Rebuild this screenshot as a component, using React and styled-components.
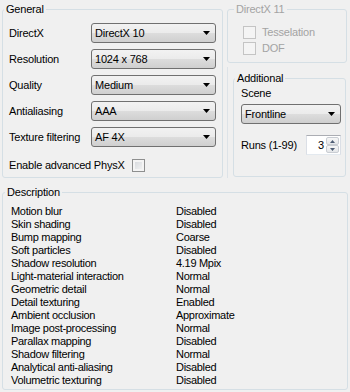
import React from 'react'
import styled, { createGlobalStyle } from 'styled-components'

const GlobalStyle = createGlobalStyle`
  html, body {
    margin: 0;
    padding: 0;
    background: #f0f0f0;
  }
  body {
    font-family: "Liberation Sans", Arial, sans-serif;
    font-size: 11px;
    color: #000;
  }
`;

const Window = styled.div`
  width: 350px;
  height: 392px;
  box-sizing: border-box;
  padding: 3px 0 0 2px;
  display: flex;
  flex-direction: column;
  gap: 8px;
  overflow: hidden;
  letter-spacing: -0.2px;
`;

const TopRow = styled.div`
  display: flex;
  gap: 4px;
`;

const Column = styled.div`
  display: flex;
  flex-direction: column;
  gap: 4px;
`;

const GroupBox = styled.fieldset`
  margin: 0;
  padding: 0;
  min-width: 0;
  box-sizing: border-box;
  width: ${p => p.$w}px;
  height: ${p => p.$h}px;
  border: 1px solid #d5dfe5;
  border-radius: 3px;
`;

const Legend = styled.legend`
  margin-left: ${p => p.$offset}px;
  padding: 0 2px;
  line-height: 13px;
  color: ${p => (p.$disabled ? '#a3a3a3' : '#000')};
`;

// thin frame the "Additional" group sits in
const Panel = styled.div`
  box-sizing: border-box;
  width: 122px;
  height: 111px;
  padding: 5px 0 0 5px;
  border-left: 1px solid #dde3e8;
`;

const FormGrid = styled.div`
  display: grid;
  grid-template-columns: 82px 125px;
  grid-auto-rows: 20px;
  row-gap: 6px;
  align-items: center;
  padding: 7px 0 0 6px;
`;

const Label = styled.span`
  line-height: 13px;
  white-space: nowrap;
  color: ${p => (p.$disabled ? '#a3a3a3' : '#000')};
`;

const Combo = styled.div`
  box-sizing: border-box;
  width: ${p => p.$w || 125}px;
  height: 20px;
  display: flex;
  align-items: center;
  justify-content: space-between;
  padding: 0 5px 0 3px;
  border: 1px solid #707070;
  border-radius: 3px;
  background: linear-gradient(#f2f2f2 0%, #ebebeb 50%, #dddddd 50%, #cfcfcf 100%);
  white-space: nowrap;
`;

const CheckRow = styled.div`
  display: flex;
  align-items: center;
  gap: ${p => p.$gap}px;
  height: 13px;
  margin-top: ${p => p.$top || 0}px;
  padding-left: ${p => p.$indent || 0}px;
`;

const CheckBox = styled.span`
  box-sizing: border-box;
  width: 13px;
  height: 13px;
  flex: none;
  border: 1px solid ${p => (p.$disabled ? '#c4c4c4' : '#8e8f8f')};
  background: ${p =>
    p.$disabled ? '#f4f4f4' : 'linear-gradient(135deg, #d2d5da 0%, #f6f6f6 100%)'};
  box-shadow: inset 0 0 0 2px #f4f4f4;
`;

const CheckList = styled.div`
  display: flex;
  flex-direction: column;
  gap: 3px;
  padding: 10px 0 0 15px;
`;

const AdditionalBody = styled.div`
  display: flex;
  flex-direction: column;
  padding: 2px 0 0 7px;
`;

const Stack = styled.div`
  margin-top: ${p => p.$top}px;
`;

const RunsRow = styled.div`
  display: flex;
  align-items: center;
  height: 20px;
  margin-top: 11px;
`;

const RunsLabel = styled.span`
  width: 65px;
  line-height: 13px;
  white-space: nowrap;
`;

const Spinner = styled.div`
  box-sizing: border-box;
  width: 35px;
  height: 20px;
  display: flex;
  background: #fff;
  border: 1px solid #dbdfe6;
  border-top-color: #abadb3;
  border-bottom-color: #e3e9ef;
`;

const SpinValue = styled.span`
  flex: 1;
  text-align: right;
  padding-right: 2px;
  line-height: 18px;
`;

const SpinButtons = styled.div`
  width: 13px;
  display: flex;
  flex-direction: column;
  padding: 1px 1px 1px 0;
`;

const SpinButton = styled.div`
  flex: 1;
  display: flex;
  align-items: center;
  justify-content: center;
  border: 1px solid #c9cdd3;
  border-radius: 2px;
  background: linear-gradient(#f7f7f7, #e4e6e9);
`;

const DescGrid = styled.div`
  display: grid;
  grid-template-columns: 165px auto;
  grid-auto-rows: 13px;
  line-height: 13px;
  padding: 6px 0 0 8px;
  letter-spacing: -0.3px;
  white-space: nowrap;
`;

function Arrow() {
  return (
    <svg width="7" height="4" viewBox="0 0 7 4">
      <path d="M0 0h7L3.5 4z" fill="#000" />
    </svg>
  )
}

function SpinArrow({ up }) {
  return (
    <svg width="5" height="3" viewBox="0 0 5 3">
      <path d={up ? 'M0 3h5L2.5 0z' : 'M0 0h5L2.5 3z'} fill="#4e5d74" />
    </svg>
  )
}

function Select({ value, w }) {
  return (
    <Combo $w={w}>
      <span>{value}</span>
      <Arrow />
    </Combo>
  )
}

const settings = [
  ['DirectX', 'DirectX 10'],
  ['Resolution', '1024 x 768'],
  ['Quality', 'Medium'],
  ['Antialiasing', 'AAA'],
  ['Texture filtering', 'AF 4X'],
]

const description = [
  ['Motion blur', 'Disabled'],
  ['Skin shading', 'Disabled'],
  ['Bump mapping', 'Coarse'],
  ['Soft particles', 'Disabled'],
  ['Shadow resolution', '4.19 Mpix'],
  ['Light-material interaction', 'Normal'],
  ['Geometric detail', 'Normal'],
  ['Detail texturing', 'Enabled'],
  ['Ambient occlusion', 'Approximate'],
  ['Image post-processing', 'Normal'],
  ['Parallax mapping', 'Disabled'],
  ['Shadow filtering', 'Normal'],
  ['Analytical anti-aliasing', 'Disabled'],
  ['Volumetric texturing', 'Disabled'],
]

export default function App() {
  return (
    <>
      <GlobalStyle />
      <Window>
        <TopRow>
          <GroupBox $w={221} $h={175}>
            <Legend $offset={1}>General</Legend>
            <FormGrid>
              {settings.map(([label, value]) => (
                <React.Fragment key={label}>
                  <Label>{label}</Label>
                  <Select value={value} />
                </React.Fragment>
              ))}
            </FormGrid>
            <CheckRow $gap={7} $top={12} $indent={6}>
              <Label>Enable advanced PhysX</Label>
              <CheckBox />
            </CheckRow>
          </GroupBox>

          <Column>
            <GroupBox $w={120} $h={60}>
              <Legend $offset={6} $disabled>DirectX 11</Legend>
              <CheckList>
                <CheckRow $gap={6}>
                  <CheckBox $disabled />
                  <Label $disabled>Tesselation</Label>
                </CheckRow>
                <CheckRow $gap={6}>
                  <CheckBox $disabled />
                  <Label $disabled>DOF</Label>
                </CheckRow>
              </CheckList>
            </GroupBox>

            <Panel>
              <GroupBox $w={113} $h={105}>
                <Legend $offset={1}>Additional</Legend>
                <AdditionalBody>
                  <Label>Scene</Label>
                  <Stack $top={4}>
                    <Select value="Frontline" w={100} />
                  </Stack>
                  <RunsRow>
                    <RunsLabel>Runs (1-99)</RunsLabel>
                    <Spinner>
                      <SpinValue>3</SpinValue>
                      <SpinButtons>
                        <SpinButton><SpinArrow up /></SpinButton>
                        <SpinButton><SpinArrow /></SpinButton>
                      </SpinButtons>
                    </Spinner>
                  </RunsRow>
                </AdditionalBody>
              </GroupBox>
            </Panel>
          </Column>
        </TopRow>

        <GroupBox $w={346} $h={204}>
          <Legend $offset={2}>Description</Legend>
          <DescGrid>
            {description.map(([name, value]) => (
              <React.Fragment key={name}>
                <span>{name}</span>
                <span>{value}</span>
              </React.Fragment>
            ))}
          </DescGrid>
        </GroupBox>
      </Window>
    </>
  )
}
